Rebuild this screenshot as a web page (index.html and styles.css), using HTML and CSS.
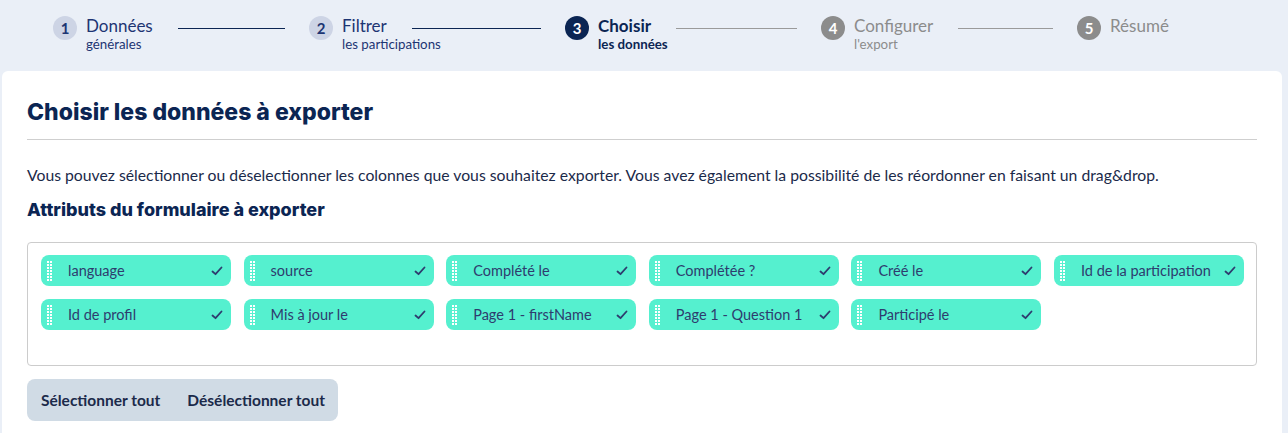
FILE: index.html
```html
<!DOCTYPE html>
<html lang="fr">
<head>
    <meta charset="UTF-8">
    <meta name="viewport" content="width=device-width, initial-scale=1.0">
    <title>Export</title>
    <link rel="stylesheet" href="styles.css">
</head>
<body>

    <div class="stepper">
        <div class="step done">
            <span class="step-num">1</span>
            <div class="step-label">Données<small>générales</small></div>
            <span class="step-line"></span>
        </div>
        <div class="step done">
            <span class="step-num">2</span>
            <div class="step-label">Filtrer<small>les participations</small></div>
            <span class="step-line"></span>
        </div>
        <div class="step current">
            <span class="step-num">3</span>
            <div class="step-label">Choisir<small>les données</small></div>
            <span class="step-line"></span>
        </div>
        <div class="step todo">
            <span class="step-num">4</span>
            <div class="step-label">Configurer<small>l'export</small></div>
            <span class="step-line"></span>
        </div>
        <div class="step todo last">
            <span class="step-num">5</span>
            <div class="step-label">Résumé</div>
        </div>
    </div>

    <div class="card">
        <h1>Choisir les données à exporter</h1>
        <p class="intro">Vous pouvez sélectionner ou déselectionner les colonnes que vous souhaitez exporter. Vous avez également la possibilité de les réordonner en faisant un drag&amp;drop.</p>
        <h2>Attributs du formulaire à exporter</h2>

        <div class="chips">
            <div class="chip"><svg class="handle" viewBox="0 0 5 20"><use href="#dots" /></svg><span class="chip-text">language</span><svg class="check" viewBox="0 0 12 10"><path d="M1.5 5.5 L4.5 8.2 L10.5 1.5" /></svg></div>
            <div class="chip"><svg class="handle" viewBox="0 0 5 20"><use href="#dots" /></svg><span class="chip-text">source</span><svg class="check" viewBox="0 0 12 10"><path d="M1.5 5.5 L4.5 8.2 L10.5 1.5" /></svg></div>
            <div class="chip"><svg class="handle" viewBox="0 0 5 20"><use href="#dots" /></svg><span class="chip-text">Complété le</span><svg class="check" viewBox="0 0 12 10"><path d="M1.5 5.5 L4.5 8.2 L10.5 1.5" /></svg></div>
            <div class="chip"><svg class="handle" viewBox="0 0 5 20"><use href="#dots" /></svg><span class="chip-text">Complétée ?</span><svg class="check" viewBox="0 0 12 10"><path d="M1.5 5.5 L4.5 8.2 L10.5 1.5" /></svg></div>
            <div class="chip"><svg class="handle" viewBox="0 0 5 20"><use href="#dots" /></svg><span class="chip-text">Créé le</span><svg class="check" viewBox="0 0 12 10"><path d="M1.5 5.5 L4.5 8.2 L10.5 1.5" /></svg></div>
            <div class="chip"><svg class="handle" viewBox="0 0 5 20"><use href="#dots" /></svg><span class="chip-text">Id de la participation</span><svg class="check" viewBox="0 0 12 10"><path d="M1.5 5.5 L4.5 8.2 L10.5 1.5" /></svg></div>
            <div class="chip"><svg class="handle" viewBox="0 0 5 20"><use href="#dots" /></svg><span class="chip-text">Id de profil</span><svg class="check" viewBox="0 0 12 10"><path d="M1.5 5.5 L4.5 8.2 L10.5 1.5" /></svg></div>
            <div class="chip"><svg class="handle" viewBox="0 0 5 20"><use href="#dots" /></svg><span class="chip-text">Mis à jour le</span><svg class="check" viewBox="0 0 12 10"><path d="M1.5 5.5 L4.5 8.2 L10.5 1.5" /></svg></div>
            <div class="chip"><svg class="handle" viewBox="0 0 5 20"><use href="#dots" /></svg><span class="chip-text">Page 1 - firstName</span><svg class="check" viewBox="0 0 12 10"><path d="M1.5 5.5 L4.5 8.2 L10.5 1.5" /></svg></div>
            <div class="chip"><svg class="handle" viewBox="0 0 5 20"><use href="#dots" /></svg><span class="chip-text">Page 1 - Question 1</span><svg class="check" viewBox="0 0 12 10"><path d="M1.5 5.5 L4.5 8.2 L10.5 1.5" /></svg></div>
            <div class="chip"><svg class="handle" viewBox="0 0 5 20"><use href="#dots" /></svg><span class="chip-text">Participé le</span><svg class="check" viewBox="0 0 12 10"><path d="M1.5 5.5 L4.5 8.2 L10.5 1.5" /></svg></div>
        </div>

        <div class="btn-group">
            <button>Sélectionner tout</button>
            <button>Désélectionner tout</button>
        </div>
    </div>

    <!-- drag handle dots, reused by every chip -->
    <svg width="0" height="0" class="defs">
        <defs>
            <g id="dots" fill="#fff">
                <rect x="0" y="0" width="2" height="2" /><rect x="3" y="0" width="2" height="2" />
                <rect x="0" y="3" width="2" height="2" /><rect x="3" y="3" width="2" height="2" />
                <rect x="0" y="6" width="2" height="2" /><rect x="3" y="6" width="2" height="2" />
                <rect x="0" y="9" width="2" height="2" /><rect x="3" y="9" width="2" height="2" />
                <rect x="0" y="12" width="2" height="2" /><rect x="3" y="12" width="2" height="2" />
                <rect x="0" y="15" width="2" height="2" /><rect x="3" y="15" width="2" height="2" />
                <rect x="0" y="18" width="2" height="2" /><rect x="3" y="18" width="2" height="2" />
            </g>
        </defs>
    </svg>

</body>
</html>
```

FILE: styles.css
```css
body {
    margin: 0;
    font-family: Lato, "Noto Sans", sans-serif;
    background-color: #eaeff7;
    color: #0b2553;
}
.defs {
    position: absolute;
}

/* stepper */
.stepper {
    display: flex;
    padding: 16px 0 0 53px;
    height: 55px;
}
.step {
    flex: none;
    display: flex;
    align-items: flex-start;
    width: 256px;
}
.step.last {
    width: auto;
}
.step-num {
    flex: none;
    width: 24px;
    height: 24px;
    border-radius: 50%;
    display: flex;
    align-items: center;
    justify-content: center;
    font-size: 15px;
    font-weight: 700;
}
.step-label {
    margin-left: 9px;
    font-size: 17px;
    line-height: 20px;
    margin-top: 0;
}
.step-label small {
    display: block;
    width: 0;
    white-space: nowrap;
    font-size: 13.3px;
    line-height: 17px;
}
.step-line {
    flex: 1;
    height: 1px;
    margin: 12px 24px 0 25px;
}
.step.done .step-num {
    background: #cdd4e5;
    color: #1d3573;
}
.step.done .step-label {
    color: #1d3573;
}
.step.done .step-line {
    background: #0b2553;
}
.step.current .step-num {
    background: #0b2553;
    color: #fff;
}
.step.current .step-label {
    font-weight: 700;
    color: #0b2553;
}
.step.current .step-line,
.step.todo .step-line {
    background: #9a9a9a;
}
.step.todo .step-num {
    background: #8c8c8c;
    color: #fff;
}
.step.todo .step-label {
    color: #8c8c8c;
}

/* card */
.card {
    background: #fff;
    margin: 0 6px 0 2px;
    border-radius: 6px 6px 0 0;
    padding: 27px 25px 12px 25px;
    min-height: 340px;
}
h1 {
    font-family: Inter, sans-serif;
    font-size: 23px;
    line-height: 28px;
    font-weight: 800;
    margin: 0;
    padding-bottom: 13px;
    border-bottom: 1px solid #cfcfcf;
    color: #0b2553;
}
.intro {
    font-size: 15.75px;
    line-height: 19px;
    color: #1b2a4a;
    margin: 25px 0 15px;
}
h2 {
    font-family: Inter, sans-serif;
    font-size: 18px;
    line-height: 22px;
    font-weight: 800;
    margin: 0 0 21px;
}

/* chips */
.chips {
    border: 1px solid #cccccc;
    border-radius: 4px;
    padding: 12px 13px 35px;
    display: grid;
    grid-template-columns: repeat(6, 190px);
    column-gap: 12.6px;
    row-gap: 13px;
}
.chip {
    background: #55f0cf;
    border-radius: 8px;
    height: 31px;
    display: flex;
    align-items: center;
    padding: 0 8px 0 6px;
}
.handle {
    flex: none;
    width: 5px;
    height: 20px;
    margin-right: 16px;
}
.chip-text {
    flex: 1;
    font-size: 14.5px;
    color: #2e3c6e;
}
.check {
    width: 12px;
    height: 10px;
}
.check path {
    fill: none;
    stroke: #2e3c6e;
    stroke-width: 1.8;
    stroke-linecap: round;
    stroke-linejoin: round;
}

/* buttons */
.btn-group {
    display: inline-flex;
    margin-top: 13px;
    background: #d0dbe5;
    border-radius: 8px;
}
button {
    font-family: Lato, sans-serif;
    font-size: 15.5px;
    font-weight: 700;
    color: #1b2a4a;
    background: none;
    border: none;
    padding: 0 13px 0 14px;
    height: 42px;
    cursor: pointer;
}
```
